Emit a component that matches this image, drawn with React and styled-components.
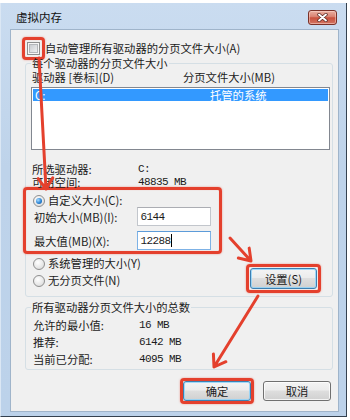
import styled, { createGlobalStyle } from "styled-components";

const RED = "#e4402d";

const GlobalStyle = createGlobalStyle`
  html, body { margin: 0; padding: 0; background: #fff; }
  body {
    font-family: "Noto Sans CJK SC", "Noto Sans", sans-serif;
    font-size: 11.3px;
    color: #1b1b1b;
  }
`;

const Page = styled.div`
  position: relative;
  width: 350px;
  height: 420px;
  padding-top: 3px;
  box-sizing: border-box;
  overflow: hidden;
`;

const Window = styled.div`
  width: 347px;
  height: 414px;
  box-sizing: border-box;
  padding: 0 7px 4px 9px;
  display: flex;
  flex-direction: column;
  background: linear-gradient(180deg, #cadcf0 0%, #bed3ea 40%, #bcd2ea 100%);
  border-left: 1px solid #dbe7f4;
  border-right: 1px solid #34414f;
  border-bottom: 1px solid #34414f;
`;

const TitleBar = styled.div`
  height: 26px;
  flex: none;
  box-sizing: border-box;
  padding: 2px 2px 0 6px;
  display: flex;
  align-items: center;
  justify-content: space-between;
`;

const Title = styled.span`
  line-height: 14px;
  font-size: 11.5px;
  color: #111;
`;

const CloseButton = styled.div`
  width: 29px;
  height: 15px;
  box-sizing: border-box;
  border: 1px solid #7a3128;
  border-radius: 3px;
  display: flex;
  align-items: center;
  justify-content: center;
  background: linear-gradient(180deg, #eab0a2 0%, #d9806f 45%, #c9503c 52%, #d27563 100%);
  box-shadow: inset 0 0 0 1px rgba(255, 220, 210, 0.5);
`;

const Panel = styled.div`
  flex: 1;
  display: flex;
  flex-direction: column;
  background: #f0f0f0;
  border: 1px solid #9fb4ca;
`;

const CheckRow = styled.div`
  margin-top: 11px;
  padding-left: 16px;
  height: 14px;
  display: flex;
  align-items: center;
  gap: 5px;
  line-height: 14px;
`;

const Highlight = styled.span`
  display: inline-flex;
  border: 3px solid ${RED};
  border-radius: 4px;
  padding: ${(p) => p.$pad}px;
  margin: ${(p) => -(p.$pad + 3)}px;
  box-shadow: 0 0 2px rgba(228, 64, 45, 0.55), inset 0 0 1px rgba(228, 64, 45, 0.4);
`;

const Checkbox = styled.span`
  width: 13px;
  height: 13px;
  box-sizing: border-box;
  border: 1px solid #8e8f8f;
  background: #f6f6f6;
  padding: 2px;
  display: block;
  &::after {
    content: "";
    display: block;
    width: 7px;
    height: 7px;
    border: 1px solid #b4b7bb;
    box-sizing: content-box;
    margin: -1px;
    background: linear-gradient(135deg, #c9ccd1 0%, #eeeff1 100%);
  }
`;

const Group = styled.fieldset`
  margin: ${(p) => p.$top}px 5px 0 14px;
  padding: ${(p) => p.$ptop}px 2px ${(p) => p.$pbottom}px 5px;
  border: 1px solid #d5dfe5;
  border-radius: 3px;
  min-width: 0;
`;

const Legend = styled.legend`
  padding: 0 1px;
  line-height: 14px;
`;

const Header = styled.div`
  display: grid;
  grid-template-columns: 151px 1fr;
  line-height: 14px;
  padding-left: 1px;
`;

const ListBox = styled.div`
  margin-top: 3px;
  height: 63px;
  box-sizing: border-box;
  border: 1px solid #828790;
  background: #fff;
  padding: 1px;
`;

const ListRow = styled.div`
  display: grid;
  grid-template-columns: 175px 1fr;
  height: 12px;
  line-height: 12px;
  padding-left: 2px;
  background: ${(p) => (p.$selected ? "#3399ff" : "transparent")};
  color: ${(p) => (p.$selected ? "#fff" : "#1b1b1b")};
`;

const InfoList = styled.div`
  margin-top: ${(p) => p.$top}px;
  padding-left: ${(p) => p.$left}px;
`;

const InfoRow = styled.div`
  display: grid;
  grid-template-columns: 106px 1fr;
  line-height: ${(p) => p.$h}px;
`;

const Mono = styled.span`
  font-family: "Liberation Mono", "DejaVu Sans Mono", monospace;
  font-size: 11px;
  letter-spacing: -0.6px;
`;

const RedFrame = styled.div`
  margin: -2px 0 0 -8px;
  width: 199px;
  box-sizing: border-box;
  border: 3px solid ${RED};
  border-radius: 4px;
  padding: 4px 8px 1px 7px;
  box-shadow: 0 0 2px rgba(228, 64, 45, 0.55), inset 0 0 1px rgba(228, 64, 45, 0.4);
`;

const RadioRow = styled.div`
  display: flex;
  align-items: center;
  gap: 3px;
  height: ${(p) => p.$h}px;
  line-height: 13px;
`;

const Radio = styled.span`
  width: 12px;
  height: 12px;
  box-sizing: border-box;
  border-radius: 50%;
  border: 1px solid #8f8f8f;
  background: radial-gradient(circle at 40% 35%, #ffffff 0%, #e6e6e6 60%, #d0d0d0 100%);
  display: flex;
  align-items: center;
  justify-content: center;
  &::after {
    content: "";
    width: 6px;
    height: 6px;
    border-radius: 50%;
    display: ${(p) => (p.$checked ? "block" : "none")};
    background: radial-gradient(circle at 35% 35%, #a9dcff 0%, #2b85d6 55%, #13508f 100%);
  }
`;

const Field = styled.div`
  display: flex;
  align-items: center;
  height: 19px;
  padding-left: 1px;
  margin-top: ${(p) => p.$top}px;
`;

const FieldLabel = styled.span`
  width: 104px;
  line-height: 14px;
`;

const Input = styled.div`
  width: 74px;
  height: 19px;
  box-sizing: border-box;
  border: 1px solid ${(p) => (p.$focused ? "#7db2e6" : "#c2c6cc")};
  border-top-color: ${(p) => (p.$focused ? "#5c9bd9" : "#abadb3")};
  background: #fff;
  padding-left: 2px;
  display: flex;
  align-items: center;
`;

const Caret = styled.span`
  width: 1px;
  height: 13px;
  margin-left: 1px;
  background: #000;
`;

const Lower = styled.div`
  display: flex;
  align-items: flex-end;
  margin-top: 1px;
`;

const RadioColumn = styled.div`
  padding-left: 2px;
`;

const ButtonSlot = styled.div`
  margin-left: auto;
  margin-right: 13px;
  display: flex;
`;

const Button = styled.button`
  width: ${(p) => p.$w}px;
  height: ${(p) => p.$h}px;
  box-sizing: border-box;
  padding: 0;
  border: 1px solid ${(p) => (p.$default ? "#3c7fb1" : "#707070")};
  border-radius: 3px;
  background: linear-gradient(180deg, #f4f4f4 0%, #ececec 45%, #dedede 50%, #d0d0d0 100%);
  box-shadow: inset 0 0 0 1px ${(p) => (p.$default ? "rgba(140, 210, 250, 0.8)" : "rgba(255, 255, 255, 0.75)")};
  font: inherit;
  color: #1b1b1b;
  line-height: 16px;
`;

const Footer = styled.div`
  margin-top: 11px;
  padding-right: 7px;
  display: flex;
  justify-content: flex-end;
  gap: 12px;
`;

const Overlay = styled.svg`
  position: absolute;
  left: 0;
  top: 0;
  pointer-events: none;
`;

const Arrow = ({ x1, y1, x2, y2 }) => {
  const a = Math.atan2(y2 - y1, x2 - x1);
  const len = 13;
  const spread = 0.6;
  const w1 = [x2 - len * Math.cos(a - spread), y2 - len * Math.sin(a - spread)];
  const w2 = [x2 - len * Math.cos(a + spread), y2 - len * Math.sin(a + spread)];
  return (
    <path
      d={`M${x1} ${y1}L${x2} ${y2}M${w1[0]} ${w1[1]}L${x2} ${y2}L${w2[0]} ${w2[1]}`}
    />
  );
};

export default function App() {
  return (
    <Page>
      <GlobalStyle />
      <Window>
        <TitleBar>
          <Title>虚拟内存</Title>
          <CloseButton>
            <svg width="11" height="9" viewBox="0 0 11 9">
              <path d="M2 1.5L9 7.5M9 1.5L2 7.5" stroke="#5a2a24" strokeWidth="3.4" strokeLinecap="round" />
              <path d="M2 1.5L9 7.5M9 1.5L2 7.5" stroke="#fff" strokeWidth="1.9" strokeLinecap="round" />
            </svg>
          </CloseButton>
        </TitleBar>
        <Panel>
          <CheckRow>
            <Highlight $pad={2}>
              <Checkbox />
            </Highlight>
            <span>自动管理所有驱动器的分页文件大小(A)</span>
          </CheckRow>

          <Group $top={1} $ptop={0} $pbottom={7}>
            <Legend>每个驱动器的分页文件大小</Legend>
            <Header>
              <span>驱动器 [卷标](D)</span>
              <span>分页文件大小(MB)</span>
            </Header>
            <ListBox>
              <ListRow $selected>
                <span>C:</span>
                <span>托管的系统</span>
              </ListRow>
            </ListBox>
            <InfoList $top={13} $left={1}>
              <InfoRow $h={13}>
                <span>所选驱动器:</span>
                <Mono>C:</Mono>
              </InfoRow>
              <InfoRow $h={13}>
                <span>可用空间:</span>
                <Mono>48835 MB</Mono>
              </InfoRow>
            </InfoList>

            <RedFrame>
              <RadioRow $h={13}>
                <Radio $checked />
                <span>自定义大小(C):</span>
              </RadioRow>
              <Field $top={0}>
                <FieldLabel>初始大小(MB)(I):</FieldLabel>
                <Input>
                  <Mono>6144</Mono>
                </Input>
              </Field>
              <Field $top={5}>
                <FieldLabel>最大值(MB)(X):</FieldLabel>
                <Input $focused>
                  <Mono>12288</Mono>
                  <Caret />
                </Input>
              </Field>
            </RedFrame>

            <Lower>
              <RadioColumn>
                <RadioRow $h={17}>
                  <Radio />
                  <span>系统管理的大小(Y)</span>
                </RadioRow>
                <RadioRow $h={17}>
                  <Radio />
                  <span>无分页文件(N)</span>
                </RadioRow>
              </RadioColumn>
              <ButtonSlot>
                <Highlight $pad={1}>
                  <Button $w={67} $h={21} $default>
                    设置(S)
                  </Button>
                </Highlight>
              </ButtonSlot>
            </Lower>
          </Group>

          <Group $top={3} $ptop={3} $pbottom={1}>
            <Legend>所有驱动器分页文件大小的总数</Legend>
            <InfoList $top={0} $left={2}>
              <InfoRow $h={17}>
                <span>允许的最小值:</span>
                <Mono>16 MB</Mono>
              </InfoRow>
              <InfoRow $h={17}>
                <span>推荐:</span>
                <Mono>6142 MB</Mono>
              </InfoRow>
              <InfoRow $h={17}>
                <span>当前已分配:</span>
                <Mono>4095 MB</Mono>
              </InfoRow>
            </InfoList>
          </Group>

          <Footer>
            <Highlight $pad={0}>
              <Button $w={68} $h={20} $default>
                确定
              </Button>
            </Highlight>
            <Button $w={68} $h={20}>
              取消
            </Button>
          </Footer>
        </Panel>
      </Window>

      <Overlay width="350" height="420" viewBox="0 0 350 420">
        <g fill="none" stroke={RED} strokeWidth="3" strokeLinecap="round" strokeLinejoin="round">
          <Arrow x1={39} y1={58} x2={46} y2={189} />
          <Arrow x1={230} y1={238} x2={251} y2={261} />
          <Arrow x1={258} y1={296} x2={214} y2={367} />
        </g>
      </Overlay>
    </Page>
  );
}
